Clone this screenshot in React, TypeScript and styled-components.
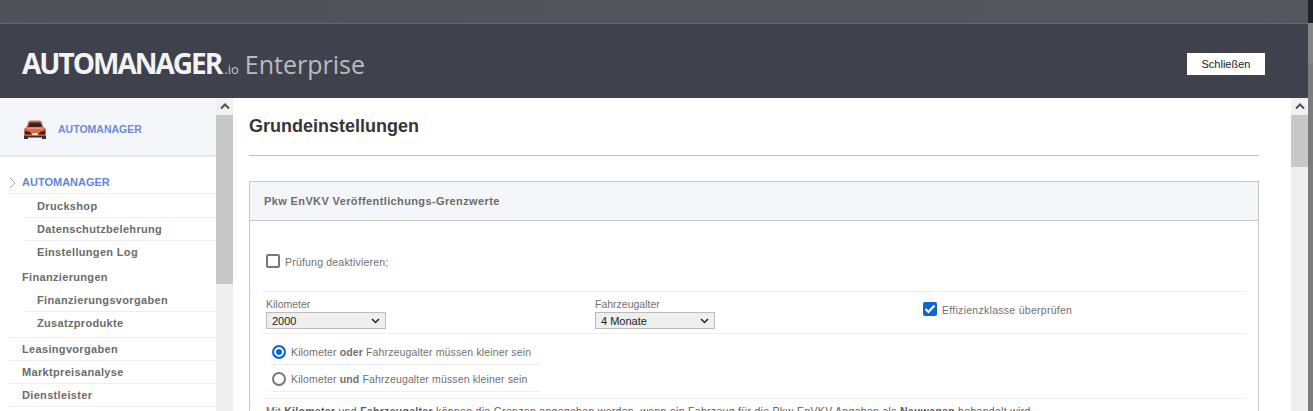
import React from 'react'
import styled, { createGlobalStyle } from 'styled-components'

const Global = createGlobalStyle`
  html, body { margin: 0; padding: 0; height: 100%; overflow: hidden; background: #fff; }
  body { font-family: "Liberation Sans", Arial, sans-serif; }
  * { box-sizing: border-box; }
`

const Page = styled.div`
  width: 1313px;
  height: 411px;
  display: flex;
  overflow: hidden;
`

const Dialog = styled.div`
  width: 1308px;
  display: flex;
  flex-direction: column;
`

const OuterScroll = styled.div`
  width: 5px;
  background: linear-gradient(#1f2229 0, #1f2229 23px, #858585 23px, #858585 63px, #7c7c7c 63px);
`

const TopStrip = styled.div`
  height: 24px;
  flex: none;
  background: linear-gradient(90deg, #4f5159, #54575d);
  border-bottom: 1px solid #63666c;
`

const Header = styled.header`
  height: 74px;
  flex: none;
  background: #3f424d;
  display: flex;
  align-items: center;
  justify-content: space-between;
  padding: 0 43px 0 22px;
`

const Brand = styled.div`
  display: flex;
  align-items: baseline;
  font-family: "Open Sans", sans-serif;
  white-space: nowrap;
  margin-top: 3px;
`

const BrandName = styled.span`
  font-size: 28px;
  font-weight: 700;
  color: #f2f3f4;
  letter-spacing: -2px;
`

const BrandTld = styled.span`
  font-size: 13px;
  color: #c4c6ca;
  margin: 0 6px 0 3px;
`

const BrandProduct = styled.span`
  font-size: 25px;
  color: #b9bbbf;
`

const CloseButton = styled.button`
  width: 78px;
  height: 22px;
  border: 0;
  padding: 0;
  background: #fff;
  color: #222;
  font: 11px "Liberation Sans", Arial, sans-serif;
  margin-top: 6px;
`

const Body = styled.div`
  flex: 1;
  min-height: 0;
  display: flex;
`

const Sidebar = styled.aside`
  width: 233px;
  flex: none;
  display: flex;
`

const SideContent = styled.div`
  width: 216px;
  flex: none;
`

const SideHead = styled.div`
  height: 59px;
  background: #f5f6fa;
  border-bottom: 2px solid #e9e9e9;
  display: flex;
  align-items: center;
  gap: 11px;
  padding: 5px 0 0 23px;
  font-size: 10.5px;
  font-weight: 700;
  color: #6b8bd6;
`

const Nav = styled.nav`
  padding: 14px 0 0 8px;
`

const NavRow = styled.div<{ $sub?: boolean; $height?: number; $top?: number; $plain?: boolean; $active?: boolean; $wide?: boolean }>`
  position: relative;
  height: ${p => p.$height ?? 23}px;
  margin-left: ${p => (p.$sub && !p.$wide ? 16 : 0)}px;
  padding-left: ${p => (p.$wide ? 29 : p.$sub ? 13 : 14)}px;
  padding-top: ${p => p.$top ?? 0}px;
  line-height: 22px;
  font-size: 11px;
  font-weight: 700;
  letter-spacing: ${p => (p.$active ? 0 : 0.33)}px;
  white-space: nowrap;
  color: ${p => (p.$active ? '#6286d5' : '#6c6c6c')};
  border-bottom: ${p => (p.$plain ? '0' : '1px solid #eeeeee')};
`

const Chevron = styled.svg`
  position: absolute;
  left: 1px;
  top: 6px;
`

const Scrollbar = styled.div`
  width: 17px;
  flex: none;
  background: #efefef;
  display: flex;
  flex-direction: column;
`

const ScrollArrow = styled.div`
  height: 17px;
  flex: none;
  background: #f1f1f1;
  display: flex;
  align-items: center;
  justify-content: center;
`

const ScrollThumb = styled.div<{ $height: number }>`
  height: ${p => p.$height}px;
  flex: none;
  background: #c8c8c8;
`

const Main = styled.main`
  flex: 1;
  min-width: 0;
  padding: 0 32px 0 16px;
  overflow: hidden;
`

const Title = styled.h1`
  margin: 0;
  height: 58px;
  padding-top: 18px;
  font-size: 18px;
  line-height: 20px;
  font-weight: 700;
  color: #363636;
  border-bottom: 1px solid #bdbdbd;
`

const Panel = styled.section`
  margin-top: 25px;
  border: 1px solid #c8c8c8;
  border-bottom: 0;
  height: 240px;
`

const PanelHead = styled.div`
  height: 39px;
  background: #f5f6fa;
  border-bottom: 1px solid #c8c8c8;
  padding-left: 14px;
  line-height: 38px;
  font-size: 11px;
  font-weight: 700;
  letter-spacing: 0.38px;
  color: #6c6c6c;
`

const PanelBody = styled.div`
  padding: 0 12px;
`

const CheckRow = styled.div`
  height: 71px;
  display: flex;
  align-items: flex-start;
  padding: 33px 0 0 4px;
  border-bottom: 1px solid #eeeeee;
`

const CheckBox = styled.span<{ $on?: boolean }>`
  width: 14px;
  height: 14px;
  flex: none;
  border-radius: 2px;
  margin-right: 5px;
  display: inline-flex;
  align-items: center;
  justify-content: center;
  border: ${p => (p.$on ? '0' : '2px solid #777')};
  background: ${p => (p.$on ? '#0b66d8' : '#fff')};
`

const Label = styled.span<{ $spacing: number }>`
  font-size: 10.5px;
  line-height: 16px;
  letter-spacing: ${p => p.$spacing}px;
  color: #707070;
  white-space: nowrap;
`

const FieldRow = styled.div`
  height: 42px;
  display: grid;
  grid-template-columns: 329px 328px 1fr;
  padding-left: 4px;
  border-bottom: 1px solid #eeeeee;
`

const Field = styled.div`
  display: flex;
  flex-direction: column;
  padding-top: 5px;
`

const FieldLabel = styled.span`
  height: 15px;
  line-height: 14px;
  font-size: 10.5px;
  color: #707070;
`

const SelectBox = styled.div`
  width: 120px;
  height: 17px;
  background: #efefef;
  border: 1px solid #bbb;
  padding: 0 5px;
  display: flex;
  align-items: center;
  justify-content: space-between;
  font-size: 11px;
  color: #222;
`

const CheckField = styled.div`
  display: flex;
  align-items: flex-start;
  padding-top: 10px;
`

const RadioGroup = styled.div`
  height: 65px;
  padding: 4px 0 0 8px;
  border-bottom: 1px solid #eeeeee;
`

const RadioRow = styled.div`
  width: 271px;
  height: 27px;
  display: flex;
  align-items: center;
  padding: 1px 0 0 2px;
  border-bottom: 1px solid #eeeeee;
  font-size: 10.5px;
  letter-spacing: 0.14px;
  color: #707070;
`

const Radio = styled.span<{ $on?: boolean }>`
  width: 14px;
  height: 14px;
  flex: none;
  margin-right: 5px;
  border-radius: 50%;
  background: #fff;
  border: 2px solid ${p => (p.$on ? '#0b66d8' : '#777')};
  ${p => p.$on && 'box-shadow: inset 0 0 0 2px #fff; background: #0b66d8;'}
`

const Note = styled.p`
  margin: 0;
  padding: 5px 0 0 4px;
  font-size: 10.5px;
  line-height: 14px;
  letter-spacing: 0.3px;
  color: #5c5c5c;
  white-space: nowrap;
`

const Arrow = () => (
  <svg width="9" height="6" viewBox="0 0 9 6">
    <path d="M1 1 4.500 4.500 8 1" fill="none" stroke="#222" strokeWidth="1.500" />
  </svg>
)

const UpArrow = () => (
  <svg width="10" height="7" viewBox="0 0 10 7">
    <path d="M1 5.500 5 1.500 9 5.500" fill="none" stroke="#505050" strokeWidth="2" />
  </svg>
)

const CarIcon = () => (
  <svg width="24" height="19" viewBox="0 0 24 19">
    <path d="M5 3C5.500 1 6.500.5 8 .5h8c1.500 0 2.500.5 3 2.500l1.500 4 2.500 2v6.500H1V9l2.500-2z" fill="#e06a48" />
    <path d="M6.500 2.500h11l1.500 4.500H5z" fill="#33272a" />
    <path d="M5 7.500h14l1 1.500H4z" fill="#ef9a7c" />
    <path d="M2 10.500l5 1.500 2 2.500H2zM22 10.500l-5 1.500-2 2.500h7z" fill="#43201f" />
    <path d="M9.500 13h5v2.500h-5z" fill="#f8f4f2" />
    <path d="M1 15.500h22V19h-4v-1.500H5V19H1z" fill="#3a2d2d" />
  </svg>
)

const App = () => {
  return (
    <Page>
      <Global />
      <Dialog>
        <TopStrip />
        <Header>
          <Brand>
            <BrandName>AUTOMANAGER</BrandName>
            <BrandTld>.io</BrandTld>
            <BrandProduct>Enterprise</BrandProduct>
          </Brand>
          <CloseButton>Schließen</CloseButton>
        </Header>
        <Body>
          <Sidebar>
            <SideContent>
              <SideHead>
                <CarIcon />
                AUTOMANAGER
              </SideHead>
              <Nav>
                <NavRow $active>
                  <Chevron width="7" height="12" viewBox="0 0 7 12">
                    <path d="M1 1l5 5-5 5" fill="none" stroke="#aaa" />
                  </Chevron>
                  AUTOMANAGER
                </NavRow>
                <NavRow $sub $height={24} $top={1}>Druckshop</NavRow>
                <NavRow $sub>Datenschutzbelehrung</NavRow>
                <NavRow $sub $plain $height={25}>Einstellungen Log</NavRow>
                <NavRow $plain>Finanzierungen</NavRow>
                <NavRow $sub>Finanzierungsvorgaben</NavRow>
                <NavRow $sub $wide $height={26}>Zusatzprodukte</NavRow>
                <NavRow>Leasingvorgaben</NavRow>
                <NavRow>Marktpreisanalyse</NavRow>
                <NavRow>Dienstleister</NavRow>
              </Nav>
            </SideContent>
            <Scrollbar>
              <ScrollArrow><UpArrow /></ScrollArrow>
              <ScrollThumb $height={169} />
            </Scrollbar>
          </Sidebar>
          <Main>
            <Title>Grundeinstellungen</Title>
            <Panel>
              <PanelHead>Pkw EnVKV Veröffentlichungs-Grenzwerte</PanelHead>
              <PanelBody>
                <CheckRow>
                  <CheckBox />
                  <Label $spacing={0.2}>Prüfung deaktivieren;</Label>
                </CheckRow>
                <FieldRow>
                  <Field>
                    <FieldLabel>Kilometer</FieldLabel>
                    <SelectBox>2000<Arrow /></SelectBox>
                  </Field>
                  <Field>
                    <FieldLabel>Fahrzeugalter</FieldLabel>
                    <SelectBox>4 Monate<Arrow /></SelectBox>
                  </Field>
                  <CheckField>
                    <CheckBox $on>
                      <svg width="12" height="10" viewBox="0 0 12 10">
                        <path d="M1.500 5 4.500 8 10.500 1.500" fill="none" stroke="#fff" strokeWidth="2.200" />
                      </svg>
                    </CheckBox>
                    <Label $spacing={0.28}>Effizienzklasse überprüfen</Label>
                  </CheckField>
                </FieldRow>
                <RadioGroup>
                  <RadioRow>
                    <Radio $on />
                    <span>Kilometer <b>oder</b> Fahrzeugalter müssen kleiner sein</span>
                  </RadioRow>
                  <RadioRow>
                    <Radio />
                    <span>Kilometer <b>und</b> Fahrzeugalter müssen kleiner sein</span>
                  </RadioRow>
                </RadioGroup>
                <Note>
                  Mit <b>Kilometer</b> und <b>Fahrzeugalter</b> können die Grenzen angegeben werden, wenn ein Fahrzeug für die Pkw-EnVKV Angaben als <b>Neuwagen</b> behandelt wird.
                </Note>
              </PanelBody>
            </Panel>
          </Main>
          <Scrollbar>
            <ScrollArrow><UpArrow /></ScrollArrow>
            <ScrollThumb $height={52} />
          </Scrollbar>
        </Body>
      </Dialog>
      <OuterScroll />
    </Page>
  )
}

export default App
